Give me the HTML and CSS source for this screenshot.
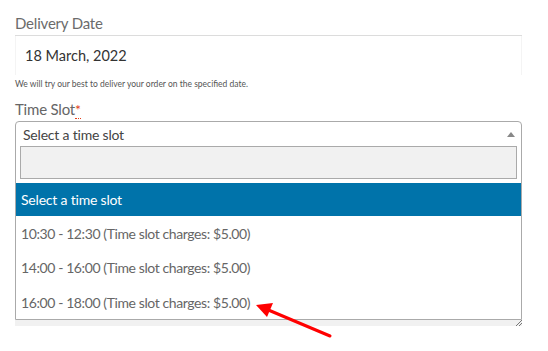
FILE: index.html
```html
<!DOCTYPE html>
<html lang="en">

<head>
    <meta charset="UTF-8">
    <meta name="viewport" content="width=device-width, initial-scale=1.0">
    <title>Delivery Date and Time Slot</title>
    <link rel="stylesheet" href="styles.css">
</head>

<body>
    <div class="checkout-fields">
        <h3 class="section-title">Delivery Date</h3>

        <div class="date-field">18 March, 2022</div>
        <p class="hint">We will try our best to deliver your order on the specified date.</p>

        <label class="field-label">Time Slot<abbr class="required" title="required">*</abbr></label>

        <div class="select-box">
            <div class="select-current">
                <span>Select a time slot</span>
                <span class="select-arrow"></span>
            </div>
            <div class="select-search">
                <input type="text" class="search-input">
            </div>
            <ul class="select-options">
                <li class="option highlighted">Select a time slot</li>
                <li class="option">10:30 - 12:30 (Time slot charges: $5.00)</li>
                <li class="option">14:00 - 16:00 (Time slot charges: $5.00)</li>
                <li class="option">16:00 - 18:00 (Time slot charges: $5.00)</li>
            </ul>
        </div>

        <!-- notes textarea peeking out under the dropdown -->
        <div class="notes-edge">
            <svg class="resize-grip" width="7" height="7" viewBox="0 0 7 7">
                <path d="M1 7 L7 1 M4 7 L7 4" stroke="#777" stroke-width="1" />
            </svg>
        </div>
    </div>

    <svg class="pointer-arrow" width="90" height="45" viewBox="0 0 90 45">
        <line x1="80" y1="40" x2="16" y2="13" stroke="#f00" stroke-width="3" stroke-linecap="round" />
        <polygon points="6,9 23,7 17,21" fill="#f00" />
    </svg>
</body>

</html>
```

FILE: styles.css
```css
body {
    position: relative;
    margin: 0;
    padding: 0;
    min-height: 351px;
    font-family: Lato, "Open Sans", sans-serif;
    background: #fff;
}

.checkout-fields {
    width: 507px;
    padding: 14px 0 0 15px;
}

.section-title {
    margin: 0;
    padding-bottom: 3px;
    font-size: 15px;
    font-weight: normal;
    color: #6b6b6b;
    line-height: 18px;
    letter-spacing: -0.2px;
    border-bottom: 1px solid #dcdcdc;
}

.date-field {
    height: 39px;
    line-height: 39px;
    padding-left: 9px;
    font-size: 14.5px;
    color: #333;
    border-left: 1px solid #f4f4f4;
    border-right: 1px solid #f4f4f4;
    box-sizing: border-box;
}

.hint {
    margin: 0;
    font-size: 8.5px;
    line-height: 18px;
    color: #555;
}

.field-label {
    display: block;
    margin-top: 8px;
    font-size: 15px;
    line-height: 17px;
    color: #666;
    letter-spacing: -0.2px;
}

.required {
    color: #e2401c;
    text-decoration: none;
    border-bottom: 1px dotted #e2401c;
    font-size: 14px;
    vertical-align: top;
}

.select-box {
    margin-top: 3px;
    border: 1px solid #aaa;
    border-radius: 4px 4px 0 0;
    background: #fff;
}

.select-current {
    display: flex;
    justify-content: space-between;
    align-items: center;
    height: 24px;
    padding: 0 6px 0 7px;
    font-size: 14px;
    color: #444;
    letter-spacing: -0.2px;
}

.select-arrow {
    width: 0;
    height: 0;
    border-left: 4px solid transparent;
    border-right: 4px solid transparent;
    border-bottom: 5px solid #888;
}

.select-search {
    padding: 0 4px 4px;
}

.search-input {
    display: block;
    width: 100%;
    height: 33px;
    box-sizing: border-box;
    border: 1px solid #aaa;
    background: #f1f1f1;
    margin: 0;
}

.select-options {
    list-style: none;
    margin: 0;
    padding: 0;
}

.option {
    height: 34.4px;
    line-height: 32px;
    padding: 2px 0 0 5px;
    box-sizing: border-box;
    font-size: 14px;
    color: #666;
    letter-spacing: -0.4px;
}

.option.highlighted {
    background: #0073aa;
    color: #fff;
    height: 33px;
    line-height: 33px;
    padding-top: 0;
    letter-spacing: -0.2px;
}

.notes-edge {
    position: relative;
    height: 6px;
    background: #f1f1f1;
}

.resize-grip {
    position: absolute;
    right: 0;
    bottom: 0;
}

.pointer-arrow {
    position: absolute;
    left: 250px;
    top: 296px;
}
```
